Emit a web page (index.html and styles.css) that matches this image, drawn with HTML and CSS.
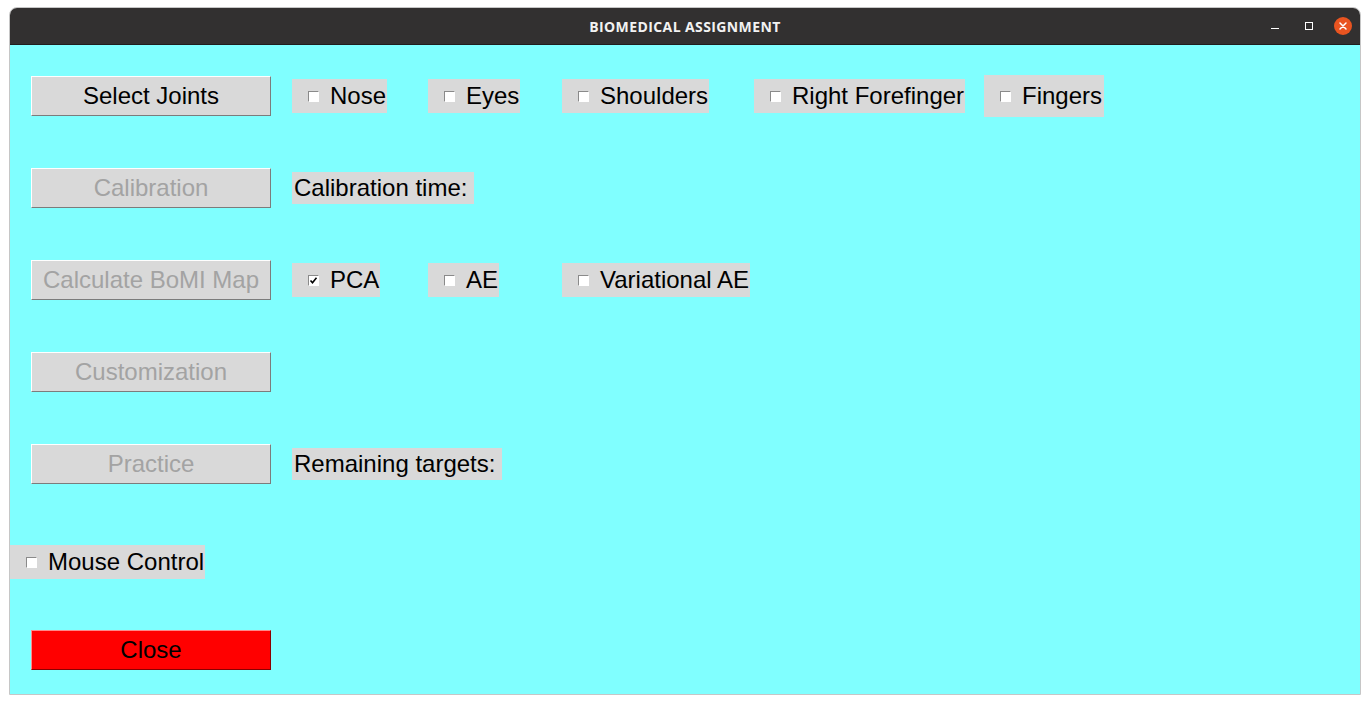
FILE: index.html
```html
<!DOCTYPE html>
<html lang="en">
<head>
<meta charset="utf-8">
<title>BIOMEDICAL ASSIGNMENT</title>
<link rel="stylesheet" href="styles.css">
</head>
<body>
<div class="window">
  <div class="titlebar">
    <div class="tb-left"></div>
    <div class="tb-title">BIOMEDICAL ASSIGNMENT</div>
    <div class="tb-right">
      <svg class="tb-controls" width="90" height="36" viewBox="0 0 90 36">
        <rect x="1" y="20" width="8" height="1" fill="#ffffff"/>
        <rect x="35.5" y="14.5" width="7" height="7" fill="none" stroke="#ffffff" stroke-width="1"/>
        <circle cx="73" cy="18" r="9" fill="#e95420"/>
        <path d="M70 15 L76 21 M76 15 L70 21" stroke="#ffffff" stroke-width="1.5" stroke-linecap="round"/>
      </svg>
    </div>
  </div>
  <div class="content">
    <div class="btn r1">Select Joints</div>
    <label class="chk r1 c2"><span class="box"></span><span class="txt">Nose</span></label>
    <label class="chk r1 c3"><span class="box"></span><span class="txt">Eyes</span></label>
    <label class="chk r1 c4"><span class="box"></span><span class="txt">Shoulders</span></label>
    <label class="chk r1 c5"><span class="box"></span><span class="txt">Right Forefinger</span></label>
    <label class="chk chk-tall r1 c6"><span class="box"></span><span class="txt">Fingers</span></label>

    <div class="btn btn-disabled r2">Calibration</div>
    <div class="lbl r2 c2">Calibration time:</div>

    <div class="btn btn-disabled r3">Calculate BoMI Map</div>
    <label class="chk r3 c2"><span class="box"><svg width="9" height="9" viewBox="0 0 9 9"><path d="M1.5 4.5 L3.5 6.8 L7.5 1.8" fill="none" stroke="#000" stroke-width="1.6"/></svg></span><span class="txt">PCA</span></label>
    <label class="chk r3 c3"><span class="box"></span><span class="txt">AE</span></label>
    <label class="chk r3 c4"><span class="box"></span><span class="txt">Variational AE</span></label>

    <div class="btn btn-disabled r4">Customization</div>

    <div class="btn btn-disabled r5">Practice</div>
    <div class="lbl r5 c2">Remaining targets:</div>

    <label class="chk chk-mouse r6"><span class="box"></span><span class="txt">Mouse Control</span></label>

    <div class="btn btn-close r7">Close</div>
  </div>
</div>
</body>
</html>
```
FILE: styles.css
```css
html, body {
  margin: 0;
  padding: 0;
  background: #ffffff;
}

body {
  width: 1370px;
  height: 705px;
  overflow: hidden;
}

.window {
  margin: 7px 0 0 9px;
  width: 1352px;
  box-sizing: border-box;
  border: 1px solid #c6c6c6;
  border-radius: 8px 8px 0 0;
  overflow: hidden;
}

.titlebar {
  height: 37px;
  box-sizing: border-box;
  background: #323030;
  border-bottom: 1px solid #1f1e1e;
  display: grid;
  grid-template-columns: 1fr auto 1fr;
  align-items: center;
}

.tb-title {
  font-family: "Open Sans", "DejaVu Sans", sans-serif;
  font-weight: 700;
  font-size: 14px;
  color: #f2f2f2;
  letter-spacing: 0.4px;
}

.tb-right {
  display: flex;
  justify-content: flex-end;
  align-items: center;
}

.tb-controls {
  display: block;
}

.content {
  height: 649px;
  box-sizing: border-box;
  background: #80ffff;
  padding-top: 5px;
  display: grid;
  grid-template-columns: 282px 136px 134px 192px 230px 1fr;
  grid-template-rows: 92px 92px 92px 92px 92px 104px 72px;
  align-items: center;
  justify-items: start;
  font-family: "Liberation Sans", Arial, sans-serif;
  font-size: 24px;
  color: #000000;
}

.r1 { grid-row: 1; }
.r2 { grid-row: 2; }
.r3 { grid-row: 3; }
.r4 { grid-row: 4; }
.r5 { grid-row: 5; }
.r6 { grid-row: 6; }
.r7 { grid-row: 7; }
.c2 { grid-column: 2; }
.c3 { grid-column: 3; }
.c4 { grid-column: 4; }
.c5 { grid-column: 5; }
.c6 { grid-column: 6; }

.btn {
  grid-column: 1;
  justify-self: center;
  width: 240px;
  height: 40px;
  box-sizing: border-box;
  background: #d9d9d9;
  border: 1px solid;
  border-color: #ffffff #7c7c7c #7c7c7c #ffffff;
  display: flex;
  align-items: center;
  justify-content: center;
  line-height: 28px;
  white-space: nowrap;
}

.btn-disabled {
  color: #a3a3a3;
}

.btn-close {
  background: #ff0000;
  border-color: #ff8a8a #8a0000 #8a0000 #ff8a8a;
  color: #000000;
}

.chk {
  display: flex;
  align-items: center;
  background: #d9d9d9;
  padding: 3px 1px 3px 16px;
  line-height: 28px;
  white-space: nowrap;
}

.chk-tall {
  padding-top: 7px;
  padding-bottom: 7px;
  padding-right: 2px;
}

.chk-mouse {
  grid-column: 1;
}

.box {
  width: 11px;
  height: 11px;
  box-sizing: border-box;
  background: #ffffff;
  border: 1px solid;
  border-color: #8a8a8a #ffffff #ffffff #8a8a8a;
  margin-right: 11px;
  display: flex;
  align-items: center;
  justify-content: center;
  flex: none;
}

.box svg {
  display: block;
}

.lbl {
  grid-column: 2 / span 2;
  background: #d9d9d9;
  padding: 2px 7px 2px 2px;
  line-height: 28px;
  white-space: nowrap;
}
```
